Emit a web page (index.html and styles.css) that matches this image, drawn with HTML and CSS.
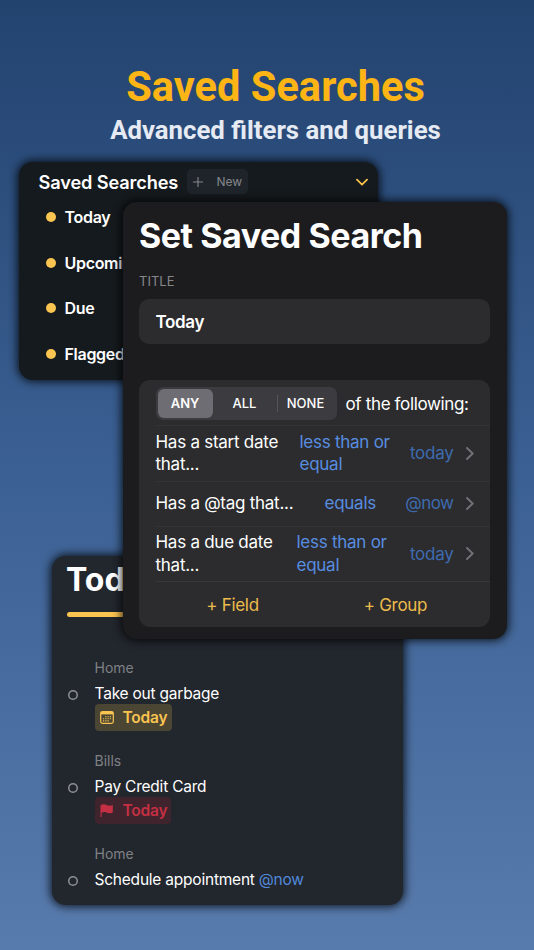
FILE: index.html
```html
<!DOCTYPE html>
<html lang="en">
<head>
<meta charset="UTF-8">
<meta name="viewport" content="width=device-width, initial-scale=1.0">
<title>Saved Searches</title>
<link rel="stylesheet" href="styles.css">
</head>
<body>
<header class="hero">
    <h1>Saved Searches</h1>
    <p>Advanced filters and queries</p>
</header>

<section class="card searches">
    <div class="searches-head">
        <h2>Saved Searches</h2>
        <button class="new-btn">
            <svg width="10" height="10" viewBox="0 0 10 10"><path d="M5 0v10M0 5h10"/></svg>
            <span>New</span>
        </button>
        <svg class="collapse" width="12" height="8" viewBox="0 0 12 8"><path d="M1 1.7l5 5 5-5"/></svg>
    </div>
    <ul class="search-list">
        <li>Today</li>
        <li>Upcoming</li>
        <li>Due</li>
        <li>Flagged</li>
    </ul>
</section>

<section class="card today">
    <h2>Today</h2>
    <div class="bar"></div>
    <div class="task">
        <p class="project">Home</p>
        <p class="name">Take out garbage</p>
        <span class="tag due">
            <svg width="14" height="13" viewBox="0 0 14 13"><rect x=".7" y=".7" width="12.6" height="11.6" rx="1.8" fill="none" stroke="currentColor" stroke-width="1.2"/><path d="M.7 2.2h12.6" stroke="currentColor" stroke-width="2.4"/><path d="M5.2 5.7h6M2.9 7.8h8.3M2.9 9.9h6" stroke="currentColor" stroke-width="1.1" stroke-dasharray="1.3 1"/></svg>
            <b>Today</b>
        </span>
    </div>
    <div class="task">
        <p class="project">Bills</p>
        <p class="name">Pay Credit Card</p>
        <span class="tag flag">
            <svg width="14" height="13" viewBox="0 0 14 13"><path d="M.5 1.2C2.5 0 4.5 0 6.5 1S10.5 2 12.8 1v7.5c-2.3 1-4.3.9-6.3 0S3.2 8.2 1.6 8.8V13H.5z" fill="currentColor"/></svg>
            <b>Today</b>
        </span>
    </div>
    <div class="task">
        <p class="project">Home</p>
        <p class="name">Schedule appointment <span>@now</span></p>
    </div>
</section>

<section class="card editor">
    <h2>Set Saved Search</h2>
    <label>TITLE</label>
    <div class="field">Today</div>
    <div class="rules">
        <div class="match">
            <div class="segmented">
                <span class="on">ANY</span>
                <span>ALL</span>
                <span class="last">NONE</span>
            </div>
            <span class="following">of the following:</span>
        </div>
        <div class="rule tall">
            <span class="what">Has a start date<br>that...</span>
            <span class="op">less than or<br>equal</span>
            <span class="value">today</span>
            <svg width="8" height="13" viewBox="0 0 8 13"><path d="M1 1l5.7 5.5L1 12"/></svg>
        </div>
        <div class="rule">
            <span class="what tagged">Has a @tag that...</span>
            <span class="op">equals</span>
            <span class="value now">@now</span>
            <svg width="8" height="13" viewBox="0 0 8 13"><path d="M1 1l5.7 5.5L1 12"/></svg>
        </div>
        <div class="rule tall">
            <span class="what due-date">Has a due date<br>that...</span>
            <span class="op">less than or<br>equal</span>
            <span class="value">today</span>
            <svg width="8" height="13" viewBox="0 0 8 13"><path d="M1 1l5.7 5.5L1 12"/></svg>
        </div>
        <div class="add">
            <span>+ Field</span>
            <span>+ Group</span>
        </div>
    </div>
</section>
</body>
</html>
```
FILE: styles.css
```css
* {
    box-sizing: border-box;
    margin: 0;
    padding: 0;
}
body {
    position: relative;
    width: 534px;
    height: 950px;
    overflow: hidden;
    background: linear-gradient(#23436f, #3b6093 50%, #587bad);
    font-family: Inter, "Liberation Sans", sans-serif;
    color: #fff;
    white-space: nowrap;
}
svg {
    display: block;
    flex: none;
}
.hero {
    padding-top: 62px;
    margin-left: 17px;
    text-align: center;
    font-family: Roboto, sans-serif;
}
.hero h1 {
    font-size: 41.6px;
    line-height: 50px;
    font-weight: 700;
    color: #fdb515;
}
.hero p {
    font-size: 25.75px;
    line-height: 30px;
    margin-top: 3px;
    font-weight: 700;
    color: #e6eaf3;
}

/* the three cards overlap each other */
.card {
    position: absolute;
    border-radius: 14px;
    box-shadow: 0 0 9px 2px rgba(0, 0, 0, .75);
}
.searches {
    left: 19px;
    top: 162px;
    width: 359px;
    height: 218px;
    padding: 7px 10px 0 19.5px;
    background: #151a1e;
}
.searches-head {
    display: flex;
    align-items: center;
    height: 25px;
}
.searches-head h2 {
    width: 148px;
    font-size: 18.2px;
    line-height: 24px;
    font-weight: 600;
    letter-spacing: -.13px;
}
.new-btn {
    display: flex;
    align-items: center;
    gap: 14px;
    width: 61px;
    height: 25px;
    padding-left: 6px;
    border: 0;
    border-radius: 5px;
    background: #1f242b;
    color: #85878b;
    font: 400 12px Inter, sans-serif;
}
.new-btn path {
    stroke: #85878b;
    stroke-width: 1.1;
}
.collapse {
    margin-left: auto;
}
.collapse path {
    fill: none;
    stroke: #f7c04c;
    stroke-width: 1.8;
    stroke-linecap: round;
    stroke-linejoin: round;
}
.search-list {
    list-style: none;
}
.search-list li {
    display: flex;
    align-items: center;
    gap: 9px;
    height: 45.8px;
    padding-left: 7px;
    font-size: 16px;
    font-weight: 600;
    letter-spacing: -.3px;
}
.search-list li::before {
    content: "";
    width: 10px;
    height: 10px;
    border-radius: 50%;
    background: #fac451;
}

.today {
    left: 52px;
    top: 556px;
    width: 351px;
    height: 349px;
    padding: 4px 14.5px;
    background: #22262d;
}
.today h2 {
    font-size: 32px;
    line-height: 40px;
    margin-left: -.5px;
    font-weight: 700;
}
.bar {
    width: 120px;
    height: 5px;
    margin: 12px 0 43px;
    border-radius: 3px;
    background: #fac451;
}
.task {
    position: relative;
    height: 92.8px;
    padding-left: 28px;
}
.task::before {
    content: "";
    position: absolute;
    left: 1px;
    top: 30px;
    width: 10px;
    height: 10px;
    box-shadow: inset 0 0 0 1.5px #8e9094;
    border-radius: 50%;
}
.project {
    font-size: 14px;
    line-height: 16px;
    color: #7f8185;
}
.name {
    font-size: 15.5px;
    line-height: 20px;
    margin-top: 8px;
    letter-spacing: -.22px;
}
.name span {
    color: #5189dc;
}
.tag {
    display: flex;
    align-items: center;
    gap: 9px;
    width: 77px;
    height: 27px;
    padding-left: 5px;
    border-radius: 4px;
    font-size: 15.5px;
}
.tag b {
    font-weight: 600;
    letter-spacing: -.2px;
}
.due {
    background: #4a4633;
    color: #fac451;
}
.flag {
    width: 76px;
    background: #3f242d;
    color: #c52f43;
}

.editor {
    left: 123px;
    top: 202px;
    width: 384px;
    height: 437px;
    padding: 13px 17px 0 16px;
    background: #1c1c1e;
}
.editor h2 {
    font-size: 34px;
    line-height: 42px;
    font-weight: 700;
    letter-spacing: -.45px;
}
.editor label {
    display: block;
    margin-top: 16px;
    font-size: 13px;
    line-height: 17px;
    color: #86868b;
}
.field {
    height: 45px;
    margin-top: 9px;
    padding-left: 16.5px;
    border-radius: 10px;
    background: #2c2c2e;
    font-size: 17px;
    line-height: 47px;
    font-weight: 600;
    letter-spacing: -.35px;
}
.rules {
    height: 247px;
    margin-top: 36px;
    padding-left: 16.5px;
    border-radius: 11px;
    background: #2c2c2e;
    font-size: 17px;
}
.match {
    display: flex;
    align-items: center;
    gap: 9px;
    height: 45px;
    padding-top: 2px;
}
.segmented {
    display: flex;
    width: 181px;
    height: 33px;
    padding: 2px;
    border-radius: 7px;
    background: #3c3b40;
    font-size: 13px;
    font-weight: 500;
    line-height: 29px;
    text-align: center;
}
.segmented span {
    width: 55px;
}
.segmented span + span {
    width: 64px;
}
.segmented .on {
    border-radius: 6px;
    background: #6e6d73;
    font-weight: 600;
}
.segmented .last {
    width: 58px;
    background: linear-gradient(#55545a, #55545a) 0 50% / 1px 17px no-repeat;
}
.following {
    letter-spacing: -.35px;
}
.rule {
    display: flex;
    align-items: center;
    height: 45px;
    padding: 0 16.5px 0 0;
    border-top: 1px solid #343436;
    line-height: 22.5px;
    letter-spacing: -.26px;
}
.tall {
    height: 55.5px;
}
.what {
    width: 144px;
}
.tagged {
    width: 169px;
}
.due-date {
    width: 141px;
}
.op {
    color: #588de0;
}
.value {
    margin-left: auto;
    margin-right: 12px;
    color: #3e6bb0;
}
.now {
    letter-spacing: -.5px;
}
.rule path {
    fill: none;
    stroke: #727276;
    stroke-width: 1.9;
    stroke-linecap: round;
    stroke-linejoin: round;
}
.add {
    display: flex;
    height: 46px;
    border-top: 1px solid #38383a;
    line-height: 46px;
    color: #ecbc4c;
    letter-spacing: -.3px;
}
.add span {
    width: 154px;
    text-align: center;
}
.add span + span {
    width: 172px;
}
```
